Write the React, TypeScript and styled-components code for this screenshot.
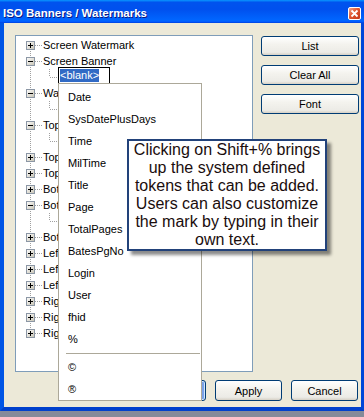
import React from "react";
import styled, { createGlobalStyle } from "styled-components";

const GlobalStyle = createGlobalStyle`
  html, body {
    margin: 0;
    padding: 0;
    background: #868a99;
  }
  body {
    width: 364px;
    height: 417px;
    overflow: hidden;
    font-family: "Liberation Sans", Arial, sans-serif;
    font-size: 11px;
  }
`;

const Window = styled.div`
  position: relative;
  width: 364px;
  height: 411px;
  display: flex;
  flex-direction: column;
`;

const TitleBar = styled.div`
  height: 23px;
  display: flex;
  justify-content: space-between;
  align-items: flex-start;
  padding: 0 3px;
  background: linear-gradient(
    180deg,
    #0997ff 0%,
    #0053ee 10%,
    #0050ee 40%,
    #0066ff 88%,
    #005bff 95%,
    #003dd7 100%
  );
`;

const Title = styled.span`
  margin-top: 7px;
  color: #fff;
  font-weight: bold;
  font-size: 11.5px;
  line-height: 13px;
  text-shadow: 1px 1px 0 #0a1883;
`;

const CloseButton = styled.div`
  margin-top: 7px;
  width: 13px;
  height: 13px;
  box-sizing: border-box;
  border: 1px solid #fff;
  border-radius: 2px;
  background: linear-gradient(135deg, #f0a58c 0%, #e0552f 45%, #c3381a 100%);
  display: flex;
  align-items: center;
  justify-content: center;
`;

const Frame = styled.div`
  flex: 1;
  display: flex;
  flex-direction: column;
  background: #ece9d8;
  border-left: 4px solid #0055e5;
  border-right: 3px solid #0046d9;
  border-bottom: 4px solid #0040cc;
  padding: 12px 2px 0 11px;
`;

const TopArea = styled.div`
  display: flex;
  gap: 8px;
`;

const Tree = styled.div`
  width: 238px;
  height: 337px;
  box-sizing: border-box;
  border: 1px solid #7f9db9;
  background: #fff;
  padding: 1px 0;
  overflow: hidden;
`;

const Row = styled.div`
  height: 16px;
  display: flex;
  align-items: center;
  white-space: nowrap;
  color: #000;
`;

const Label = styled.span`
  padding-left: 1px;
`;

const EditBox = styled.span`
  align-self: flex-start;
  margin-top: -2px;
  width: 52px;
  height: 17px;
  box-sizing: border-box;
  border: 1px solid #000;
  background: #fff;
  display: flex;
  align-items: center;
  padding-left: 1px;
`;

const Selected = styled.span`
  background: #316ac5;
  color: #fff;
  line-height: 13px;
`;

const ButtonColumn = styled.div`
  width: 98px;
  padding-top: 1px;
  display: flex;
  flex-direction: column;
  gap: 9px;
`;

const Button = styled.button<{ $default?: boolean }>`
  width: ${(p) => (p.$default ? "67px" : "100%")};
  height: 20px;
  box-sizing: border-box;
  border: 1px solid #003c74;
  border-radius: 3px;
  background: linear-gradient(180deg, #ffffff 0%, #f4f3ee 40%, #ecebe6 85%, #d6d0c5 100%);
  font-family: "Liberation Sans", Arial, sans-serif;
  font-size: 11px;
  color: #000;
  padding: 0;
  box-shadow: ${(p) => (p.$default ? "inset 0 0 0 1px #cee7ff, inset -1px -1px 0 2px #7ba2e7" : "none")};
`;

const BottomRow = styled.div`
  margin-top: 8px;
  display: flex;
  justify-content: flex-end;
  gap: 9px;
  padding-right: 1px;
`;

const DialogButton = styled(Button)`
  width: 67px;
  height: 21px;
`;

const PopupMenu = styled.div`
  position: absolute;
  left: 58px;
  top: 83px;
  width: 144px;
  height: 318px;
  box-sizing: border-box;
  border: 1px solid #aca899;
  background: #fff;
  padding: 2px 0;
`;

const MenuItem = styled.div`
  height: 22px;
  display: flex;
  align-items: center;
  padding-left: 9px;
  color: #000;
`;

const Separator = styled.div`
  height: 6px;
  display: flex;
  align-items: center;
  margin: 0 1px 0 7px;
  &::after {
    content: "";
    flex: 1;
    height: 1px;
    background: #aca899;
  }
`;

const Callout = styled.div`
  position: absolute;
  left: 127px;
  top: 139px;
  width: 200px;
  height: 112px;
  box-sizing: border-box;
  border: 2px solid #22427a;
  background: #fff;
  box-shadow: 4px 4px 3px rgba(0, 0, 0, 0.45);
  padding-top: 0px;
  text-align: center;
  font-size: 16px;
  line-height: 18px;
  color: #1a0d0d;
`;

type Kind = "plus" | "minus" | "child";

type Node = { label: string; kind: Kind; edit?: boolean };

const nodes: Node[] = [
  { label: "Screen Watermark", kind: "plus" },
  { label: "Screen Banner", kind: "minus" },
  { label: "<blank>", kind: "child", edit: true },
  { label: "Watermark", kind: "minus" },
  { label: "<blank>", kind: "child" },
  { label: "Top Left", kind: "minus" },
  { label: "<blank>", kind: "child" },
  { label: "Top Center", kind: "plus" },
  { label: "Top Right", kind: "plus" },
  { label: "Bottom Left", kind: "plus" },
  { label: "Bottom Center", kind: "minus" },
  { label: "<blank>", kind: "child" },
  { label: "Bottom Right", kind: "plus" },
  { label: "Left Top", kind: "plus" },
  { label: "Left Center", kind: "plus" },
  { label: "Left Bottom", kind: "plus" },
  { label: "Right Top", kind: "plus" },
  { label: "Right Center", kind: "plus" },
  { label: "Right Bottom", kind: "plus" },
];

const tokens = [
  "Date",
  "SysDatePlusDays",
  "Time",
  "MilTime",
  "Title",
  "Page",
  "TotalPages",
  "BatesPgNo",
  "Login",
  "User",
  "fhid",
  "%",
];

const DOT = "#a0a0a0";

const Lines = ({ kind, first, last }: { kind: Kind; first: boolean; last: boolean }) => {
  const child = kind === "child";
  return (
    <svg width={child ? 42 : 26} height={16} shapeRendering="crispEdges" style={{ flex: "none" }}>
      <defs>
        <linearGradient id="boxFill" x1="0" y1="0" x2="1" y2="1">
          <stop offset="0" stopColor="#ffffff" />
          <stop offset="1" stopColor="#c6c2b2" />
        </linearGradient>
      </defs>
      <line x1={14.5} y1={first ? 8 : 0} x2={14.5} y2={last ? 8 : 16} stroke={DOT} strokeDasharray="1 1" />
      {child ? (
        <>
          <line x1={33.5} y1={0} x2={33.5} y2={8} stroke={DOT} strokeDasharray="1 1" />
          <line x1={34} y1={8.5} x2={42} y2={8.5} stroke={DOT} strokeDasharray="1 1" />
        </>
      ) : (
        <>
          <line x1={19} y1={8.5} x2={26} y2={8.5} stroke={DOT} strokeDasharray="1 1" />
          <rect x={10.5} y={4.5} width={8} height={8} fill="url(#boxFill)" stroke="#8c97a5" />
          <line x1={12} y1={8.5} x2={17} y2={8.5} stroke="#000" />
          {kind === "plus" && <line x1={14.5} y1={6} x2={14.5} y2={11} stroke="#000" />}
        </>
      )}
    </svg>
  );
};

export default function App() {
  return (
    <>
      <GlobalStyle />
      <Window>
        <TitleBar>
          <Title>ISO Banners / Watermarks</Title>
          <CloseButton>
            <svg width="9" height="9" viewBox="0 0 9 9">
              <path d="M1.5 1.5 L7.5 7.5 M7.5 1.5 L1.5 7.5" stroke="#fff" strokeWidth="1.8" />
            </svg>
          </CloseButton>
        </TitleBar>
        <Frame>
          <TopArea>
            <Tree>
              {nodes.map((n, i) => (
                <Row key={i}>
                  <Lines kind={n.kind} first={i === 0} last={i === nodes.length - 1} />
                  {n.edit ? (
                    <EditBox>
                      <Selected>{n.label}</Selected>
                    </EditBox>
                  ) : (
                    <Label>{n.label}</Label>
                  )}
                </Row>
              ))}
            </Tree>
            <ButtonColumn>
              <Button>List</Button>
              <Button>Clear All</Button>
              <Button>Font</Button>
            </ButtonColumn>
          </TopArea>
          <BottomRow>
            <DialogButton $default>OK</DialogButton>
            <DialogButton>Apply</DialogButton>
            <DialogButton>Cancel</DialogButton>
          </BottomRow>
        </Frame>

        <PopupMenu>
          {tokens.map((t) => (
            <MenuItem key={t}>{t}</MenuItem>
          ))}
          <Separator />
          <MenuItem>©</MenuItem>
          <MenuItem>®</MenuItem>
        </PopupMenu>

        <Callout>
          Clicking on Shift+% brings
          <br />
          up the system defined
          <br />
          tokens that can be added.
          <br />
          Users can also customize
          <br />
          the mark by typing in their
          <br />
          own text.
        </Callout>
      </Window>
    </>
  );
}
